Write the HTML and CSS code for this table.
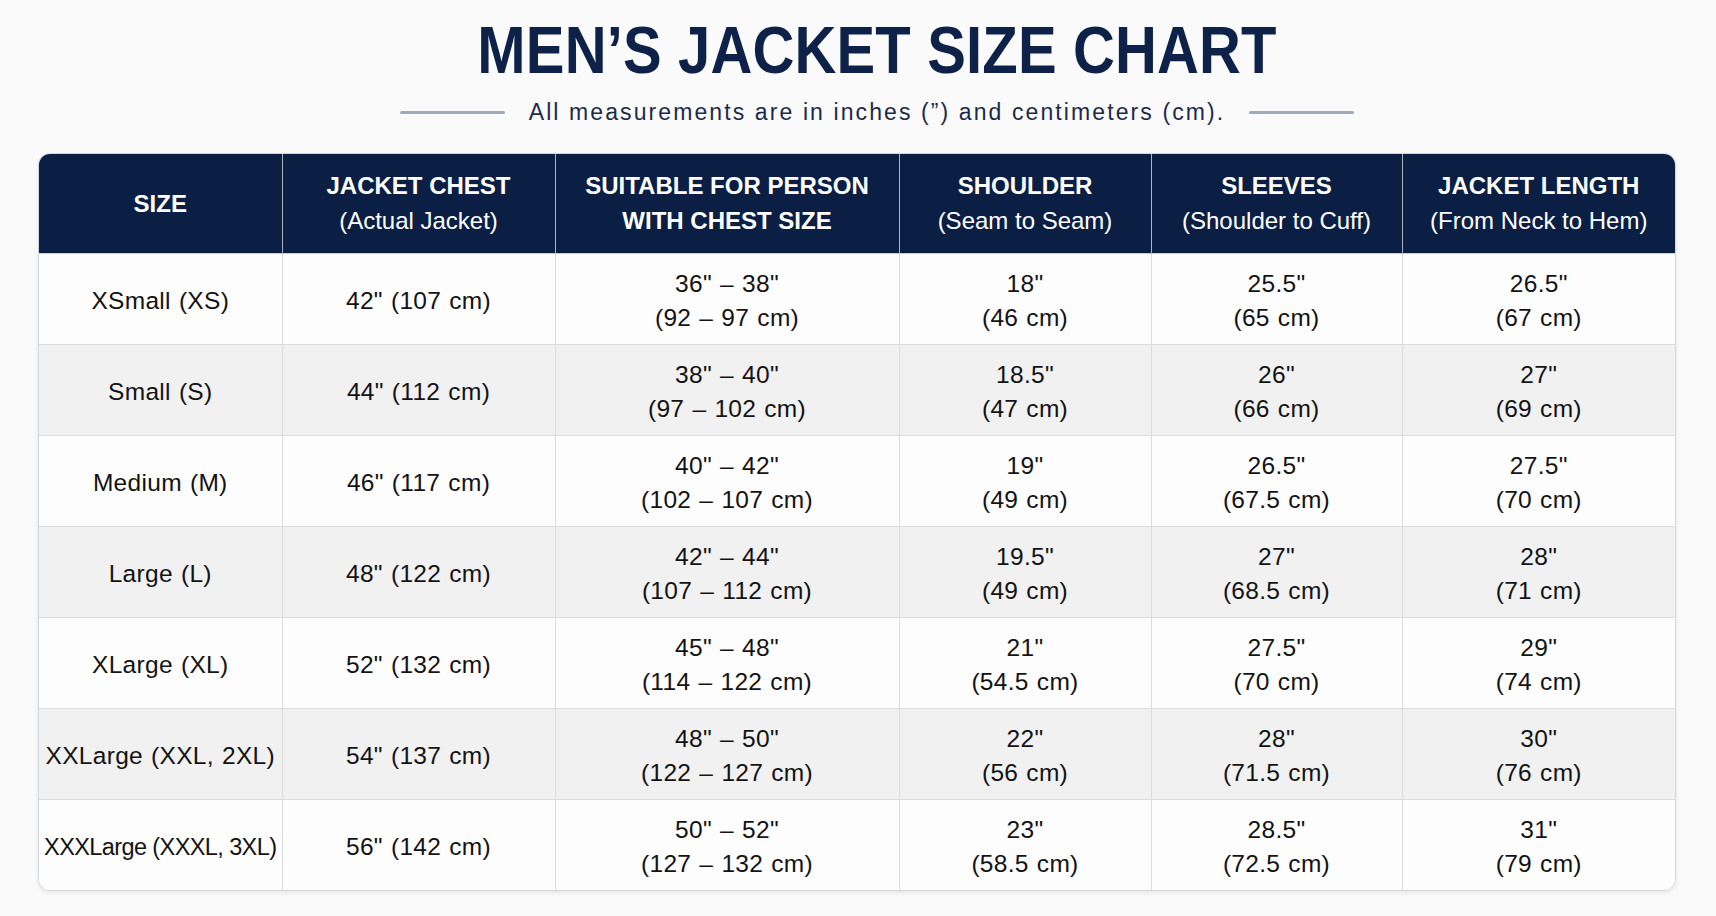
FILE: index.html
```html
<!DOCTYPE html>
<html lang="en">
<head>
<meta charset="utf-8">
<title>Men's Jacket Size Chart</title>
<link rel="stylesheet" href="styles.css">
</head>
<body>
<div class="page">
  <header class="intro">
    <h1 class="title">MEN’S JACKET SIZE CHART</h1>
    <div class="subtitle">
      <span class="rule"></span>
      <p class="subtitle-text">All measurements are in inches (”) and centimeters (cm).</p>
      <span class="rule"></span>
    </div>
  </header>

  <div class="chart">
    <table class="size-table">
      <colgroup>
        <col class="c-size">
        <col class="c-chest">
        <col class="c-fit">
        <col class="c-shoulder">
        <col class="c-sleeve">
        <col class="c-length">
      </colgroup>
      <thead>
        <tr>
          <th><span class="h-main">SIZE</span></th>
          <th><span class="h-main">JACKET CHEST</span><span class="h-sub">(Actual Jacket)</span></th>
          <th><span class="h-main">SUITABLE FOR PERSON</span><span class="h-main">WITH CHEST SIZE</span></th>
          <th><span class="h-main">SHOULDER</span><span class="h-sub">(Seam to Seam)</span></th>
          <th><span class="h-main">SLEEVES</span><span class="h-sub">(Shoulder to Cuff)</span></th>
          <th><span class="h-main">JACKET LENGTH</span><span class="h-sub">(From Neck to Hem)</span></th>
        </tr>
      </thead>
      <tbody>
        <tr>
          <td>XSmall (XS)</td>
          <td>42" (107 cm)</td>
          <td>36" – 38"<br>(92 – 97 cm)</td>
          <td>18"<br>(46 cm)</td>
          <td>25.5"<br>(65 cm)</td>
          <td>26.5"<br>(67 cm)</td>
        </tr>
        <tr>
          <td>Small (S)</td>
          <td>44" (112 cm)</td>
          <td>38" – 40"<br>(97 – 102 cm)</td>
          <td>18.5"<br>(47 cm)</td>
          <td>26"<br>(66 cm)</td>
          <td>27"<br>(69 cm)</td>
        </tr>
        <tr>
          <td>Medium (M)</td>
          <td>46" (117 cm)</td>
          <td>40" – 42"<br>(102 – 107 cm)</td>
          <td>19"<br>(49 cm)</td>
          <td>26.5"<br>(67.5 cm)</td>
          <td>27.5"<br>(70 cm)</td>
        </tr>
        <tr>
          <td>Large (L)</td>
          <td>48" (122 cm)</td>
          <td>42" – 44"<br>(107 – 112 cm)</td>
          <td>19.5"<br>(49 cm)</td>
          <td>27"<br>(68.5 cm)</td>
          <td>28"<br>(71 cm)</td>
        </tr>
        <tr>
          <td>XLarge (XL)</td>
          <td>52" (132 cm)</td>
          <td>45" – 48"<br>(114 – 122 cm)</td>
          <td>21"<br>(54.5 cm)</td>
          <td>27.5"<br>(70 cm)</td>
          <td>29"<br>(74 cm)</td>
        </tr>
        <tr>
          <td>XXLarge (XXL, 2XL)</td>
          <td>54" (137 cm)</td>
          <td>48" – 50"<br>(122 – 127 cm)</td>
          <td>22"<br>(56 cm)</td>
          <td>28"<br>(71.5 cm)</td>
          <td>30"<br>(76 cm)</td>
        </tr>
        <tr>
          <td class="tight">XXXLarge (XXXL, 3XL)</td>
          <td>56" (142 cm)</td>
          <td>50" – 52"<br>(127 – 132 cm)</td>
          <td>23"<br>(58.5 cm)</td>
          <td>28.5"<br>(72.5 cm)</td>
          <td>31"<br>(79 cm)</td>
        </tr>
      </tbody>
    </table>
  </div>
</div>
</body>
</html>
```

FILE: styles.css
```css
* { box-sizing: border-box; }

html, body {
  margin: 0;
  padding: 0;
  background: #fafafa;
}

body {
  font-family: "Liberation Sans", Arial, sans-serif;
  color: #111;
}

.page {
  width: 1716px;
  height: 916px;
  padding: 10px 40px 0 38px;
}

.intro {
  display: flex;
  flex-direction: column;
  align-items: center;
  padding-left: 40px;
}

.title {
  margin: 0;
  font-family: "Liberation Sans", Arial, sans-serif;
  font-weight: 700;
  font-size: 67px;
  line-height: 80px;
  letter-spacing: 0.2px;
  color: #0e2249;
  white-space: nowrap;
  transform: scaleX(0.865);
  transform-origin: center;
}

.subtitle {
  margin-top: 7px;
  display: flex;
  align-items: center;
  gap: 24px;
}

.rule {
  display: block;
  width: 105px;
  height: 3px;
  background: #a2a9b7;
  border-radius: 2px;
}

.subtitle-text {
  margin: 0;
  font-size: 23px;
  line-height: 30px;
  letter-spacing: 2.1px;
  color: #1c2a4a;
  white-space: nowrap;
}

.chart {
  margin-top: 26px;
  width: 1638px;
  border: 1px solid #d4d7dc;
  border-radius: 12px;
  overflow: hidden;
  background: #fdfdfd;
  box-shadow: 0 2px 4px rgba(0, 0, 0, 0.08);
}

.size-table {
  width: 100%;
  border-collapse: collapse;
  table-layout: fixed;
}

.c-size { width: 243px; }
.c-chest { width: 273px; }
.c-fit { width: 344px; }
.c-shoulder { width: 252px; }
.c-sleeve { width: 251px; }
.c-length { width: 273px; }

thead th {
  height: 99px;
  padding: 0;
  background: #0b1f45;
  color: #fff;
  text-align: center;
  vertical-align: middle;
  font-weight: 400;
  border-left: 1px solid #aab2c2;
}

thead th:first-child { border-left: none; }

.h-main,
.h-sub {
  display: block;
  font-size: 24px;
  line-height: 35px;
}

.h-main { font-weight: 700; }

tbody td {
  height: 91px;
  padding: 5px 0 0;
  text-align: center;
  vertical-align: middle;
  font-size: 24.5px;
  line-height: 34px;
  letter-spacing: 0.3px;
  word-spacing: 1px;
  color: #131313;
  border-top: 1px solid #dcdcdc;
  border-left: 1px solid #dcdcdc;
}

tbody td:first-child { border-left: none; }

tbody tr:first-child td { border-top: 1px solid #c9ced8; }

tbody tr:nth-child(odd) td { background: #fdfdfd; }
tbody tr:nth-child(even) td { background: #f1f1f1; }

tbody td.tight {
  font-size: 23.5px;
  letter-spacing: -0.6px;
  word-spacing: 0;
  white-space: nowrap;
}
```
